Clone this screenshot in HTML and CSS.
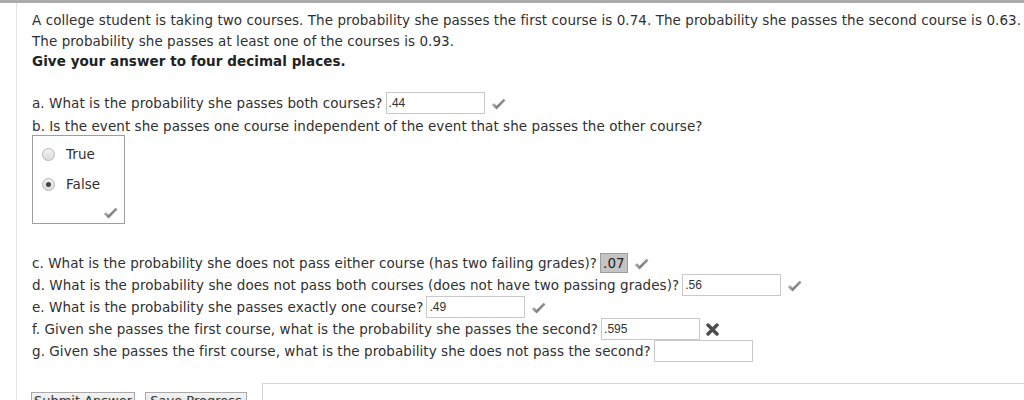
FILE: index.html
```html
<!DOCTYPE html>
<html>
<head>
<meta charset="utf-8">
<link rel="stylesheet" href="styles.css">
</head>
<body>
<div class="topbar"></div>
<div class="page">
  <p class="intro">A college student is taking two courses. The probability she passes the first course is 0.74. The probability she passes the second course is 0.63.<br>The probability she passes at least one of the courses is 0.93.<br><b>Give your answer to four decimal places.</b></p>

  <div class="row row-a">a. What is the probability she passes both courses?<span class="ans">.44</span><svg class="mark" width="15" height="12" viewBox="0 0 15 12"><defs><linearGradient id="g1" x1="0" y1="0" x2="1" y2="0"><stop offset="0" stop-color="#c0c0c0"/><stop offset="0.4" stop-color="#808080"/><stop offset="1" stop-color="#939393"/></linearGradient></defs><path d="M0.5 7 L3 5.2 L5.6 7.8 L12.6 0.8 L14.5 2.6 L5.6 11.4 Z" fill="url(#g1)"/></svg></div>
  <div class="row row-b">b. Is the event she passes one course independent of the event that she passes the other course?</div>
  <div class="choices">
    <div class="opt"><span class="radio"></span>True</div>
    <div class="opt"><span class="radio on"></span>False</div>
    <div class="choice-mark"><svg width="15" height="12" viewBox="0 0 15 12"><path d="M0.5 7 L3 5.2 L5.6 7.8 L12.6 0.8 L14.5 2.6 L5.6 11.4 Z" fill="url(#g1)"/></svg></div>
  </div>

  <div class="row row-c">c. What is the probability she does not pass either course (has two failing grades)?<span class="hl">.07</span><svg class="mark" width="15" height="12" viewBox="0 0 15 12"><path d="M0.5 7 L3 5.2 L5.6 7.8 L12.6 0.8 L14.5 2.6 L5.6 11.4 Z" fill="url(#g1)"/></svg></div>
  <div class="row">d. What is the probability she does not pass both courses (does not have two passing grades)?<span class="ans">.56</span><svg class="mark" width="15" height="12" viewBox="0 0 15 12"><path d="M0.5 7 L3 5.2 L5.6 7.8 L12.6 0.8 L14.5 2.6 L5.6 11.4 Z" fill="url(#g1)"/></svg></div>
  <div class="row">e. What is the probability she passes exactly one course?<span class="ans">.49</span><svg class="mark" width="15" height="12" viewBox="0 0 15 12"><path d="M0.5 7 L3 5.2 L5.6 7.8 L12.6 0.8 L14.5 2.6 L5.6 11.4 Z" fill="url(#g1)"/></svg></div>
  <div class="row">f. Given she passes the first course, what is the probability she passes the second?<span class="ans">.595</span><svg class="mark xmark" width="13" height="13" viewBox="0 0 13 13"><path d="M2 2 L11 11 M11 2 L2 11" stroke="#4d4d4d" stroke-width="3.4" stroke-linecap="round"/></svg></div>
  <div class="row">g. Given she passes the first course, what is the probability she does not pass the second?<span class="ans"></span></div>

  <div class="actions">
    <button class="btn">Submit Answer</button>
    <button class="btn">Save Progress</button>
    <div class="panel"></div>
  </div>
</div>
</body>
</html>
```

FILE: styles.css
```css
html, body {
  margin: 0;
  padding: 0;
  background: #fff;
  overflow: hidden;
}
body {
  font-family: "DejaVu Sans", Verdana, sans-serif;
  font-size: 13.5px;
  letter-spacing: 0.06px;
  color: #303030;
}
.topbar {
  height: 3px;
  background: #ababab;
}
.page {
  margin-left: 16px;
  border-left: 1px solid #e3e3e3;
  padding-left: 15px;
  height: 420px;
}
.intro {
  margin: 0;
  padding-top: 7px;
  line-height: 20.5px;
  white-space: nowrap;
}
.intro b {
  font-weight: bold;
  color: #222;
}
.row {
  display: flex;
  align-items: center;
  height: 22px;
  white-space: nowrap;
}
.row-a {
  margin-top: 20.5px;
}
.row-b {
  height: 20px;
  margin-top: 2px;
}
.ans {
  box-sizing: border-box;
  width: 99px;
  height: 22px;
  margin-left: 3px;
  border: 1px solid #c9c9c9;
  background: #fff;
  font-family: "Liberation Sans", Arial, sans-serif;
  font-size: 12px;
  letter-spacing: 0;
  color: #333;
  padding-left: 2px;
  display: flex;
  align-items: center;
}
.hl {
  box-sizing: border-box;
  height: 20px;
  margin-left: 3px;
  padding: 0 2px;
  background: #c4c4c4;
  border: 1px solid #9d9d9d;
  display: flex;
  align-items: center;
  font-size: 13.5px;
  color: #222;
}
.mark {
  margin-left: 6px;
  margin-top: 1px;
  flex-shrink: 0;
}
.xmark {
  margin-left: 6px;
}
.choices {
  box-sizing: border-box;
  width: 93px;
  height: 89px;
  margin-top: -1px;
  border: 1px solid #9e9e9e;
  padding-top: 3px;
}
.opt {
  height: 30px;
  display: flex;
  align-items: center;
  padding-left: 9px;
}
.radio {
  box-sizing: border-box;
  width: 13px;
  height: 13px;
  border-radius: 50%;
  border: 1px solid #b5b5b5;
  background: linear-gradient(#f0f0f0, #dcdcdc);
  margin-right: 11px;
  display: flex;
  align-items: center;
  justify-content: center;
}
.radio.on::after {
  content: "";
  width: 5px;
  height: 5px;
  border-radius: 50%;
  background: #444;
}
.choice-mark {
  display: flex;
  justify-content: flex-end;
  padding-right: 6px;
  padding-top: 8px;
}
.row-c {
  margin-top: 28px;
}
.actions {
  display: flex;
  align-items: flex-start;
  margin-top: 21px;
  margin-left: -1px;
}
.btn {
  box-sizing: border-box;
  margin-top: 9px;
  height: 24px;
  padding: 0;
  line-height: 16px;
  display: flex;
  justify-content: center;
  align-items: flex-start;
  border: 1px solid #a9a9a9;
  background: linear-gradient(#f3f3f3, #dadada);
  font-family: "DejaVu Sans", Verdana, sans-serif;
  font-size: 13px;
  color: #333;
  margin-right: 10px;
  white-space: nowrap;
  flex-shrink: 0;
}
.btn:first-child {
  width: 104px;
}
.btn:nth-child(2) {
  width: 102px;
}
.panel {
  margin-left: 5px;
  width: 800px;
  height: 60px;
  border: 1px solid #d6d6d6;
  flex-shrink: 0;
}
```
